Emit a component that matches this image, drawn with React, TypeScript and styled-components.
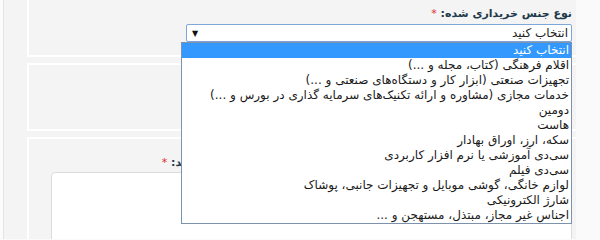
import React from "react";
import styled, { createGlobalStyle } from "styled-components";

const GlobalStyle = createGlobalStyle`
  html, body {
    margin: 0;
    padding: 0;
    background: #fafafa;
    overflow: hidden;
  }
  body {
    font-family: "DejaVu Sans", "Noto Sans", sans-serif;
  }
`;

const options = [
  "انتخاب کنید",
  "اقلام فرهنگی (کتاب، مجله و ...)",
  "تجهیزات صنعتی (ابزار کار و دستگاه‌های صنعتی و ...)",
  "خدمات مجازی (مشاوره و ارائه تکنیک‌های سرمایه گذاری در بورس و ...)",
  "دومین",
  "هاست",
  "سکه، ارز، اوراق بهادار",
  "سی‌دی آموزشی یا نرم افزار کاربردی",
  "سی‌دی فیلم",
  "لوازم خانگی، گوشی موبایل و تجهیزات جانبی، پوشاک",
  "شارژ الکترونیکی",
  "اجناس غیر مجاز، مبتذل، مستهجن و ...",
];

const App: React.FC = () => {
  return (
    <>
      <GlobalStyle />
      <Page>
        <Shell>
          <Form dir="rtl">
            <Panel $clipTop>
              <Label>
                نوع جنس خریداری شده: <Required>*</Required>
              </Label>
              <SelectWrap>
                <SelectBox>
                  <span>انتخاب کنید</span>
                  <Arrow>▼</Arrow>
                </SelectBox>
                <OptionList>
                  {options.map((text, i) => (
                    <OptionRow key={text} $active={i === 0}>
                      {text}
                    </OptionRow>
                  ))}
                </OptionList>
              </SelectWrap>
            </Panel>
            <Panel $height={64} />
            <Panel>
              <Label $top={15}>
                شرح کامل کالا یا خدماتی که خریداری کرده‌اید را به شکل دقیق وارد نمایید: <Required>*</Required>
              </Label>
              <TextArea />
            </Panel>
          </Form>
        </Shell>
        <Margin />
      </Page>
    </>
  );
};

export default App;

const Page = styled.div`
  display: flex;
  width: 600px;
  height: 239px;
  overflow: hidden;
  background: #fbfbfb;
`;

const Shell = styled.div`
  width: 573px;
  margin-left: 3px;
  border-left: 1px solid #e4e4e4;
  background: #f4f4f4;
  padding-left: 23px;
  box-sizing: border-box;
`;

const Margin = styled.div`
  flex: 1;
  background: #fafafa;
`;

const Form = styled.div`
  display: flex;
  flex-direction: column;
  gap: 6px;
`;

const Panel = styled.div<{ $clipTop?: boolean; $height?: number }>`
  position: relative;
  display: flex;
  flex-direction: column;
  align-items: flex-start;
  border: 2px solid #ffffff;
  border-top: ${(p) => (p.$clipTop ? "none" : "2px solid #ffffff")};
  border-right: none;
  padding: ${(p) => (p.$clipTop ? "5px 4px 13px 0" : "0 4px 0 0")};
  height: ${(p) => (p.$height ? `${p.$height}px` : "auto")};
  background: #f4f4f4;
`;

const Label = styled.div<{ $top?: number }>`
  margin-top: ${(p) => p.$top ?? 0}px;
  height: 18px;
  line-height: 18px;
  font-size: 11px;
  font-weight: bold;
  color: #1f3a4b;
  white-space: nowrap;
`;

const Required = styled.span`
  color: #e3262b;
  font-weight: normal;
`;

const SelectWrap = styled.div`
  position: relative;
  margin-top: 1px;
  width: 386px;
`;

const SelectBox = styled.div`
  display: flex;
  justify-content: space-between;
  align-items: center;
  height: 18px;
  box-sizing: border-box;
  padding: 0 3px 0 5px;
  background: #ffffff;
  border: 1px solid #7fa6d8;
  border-radius: 2px;
  font-size: 12px;
  color: #222;
`;

const Arrow = styled.span`
  font-size: 8px;
  color: #111;
  font-family: "DejaVu Sans", sans-serif;
`;

const OptionList = styled.div`
  position: absolute;
  top: 100%;
  right: 0;
  width: 389px;
  background: #ffffff;
  border: 1px solid #7d93ad;
  z-index: 5;
`;

const OptionRow = styled.div<{ $active?: boolean }>`
  height: 15px;
  line-height: 15px;
  padding-right: 2px;
  font-size: 12px;
  white-space: nowrap;
  background: ${(p) => (p.$active ? "#3399ff" : "transparent")};
  color: ${(p) => (p.$active ? "#ffffff" : "#1a1a1a")};
`;

const TextArea = styled.div`
  margin-top: 0;
  width: 519px;
  height: 100px;
  background: #ffffff;
  border: 1px solid #dcdcdc;
  border-radius: 4px;
`;
